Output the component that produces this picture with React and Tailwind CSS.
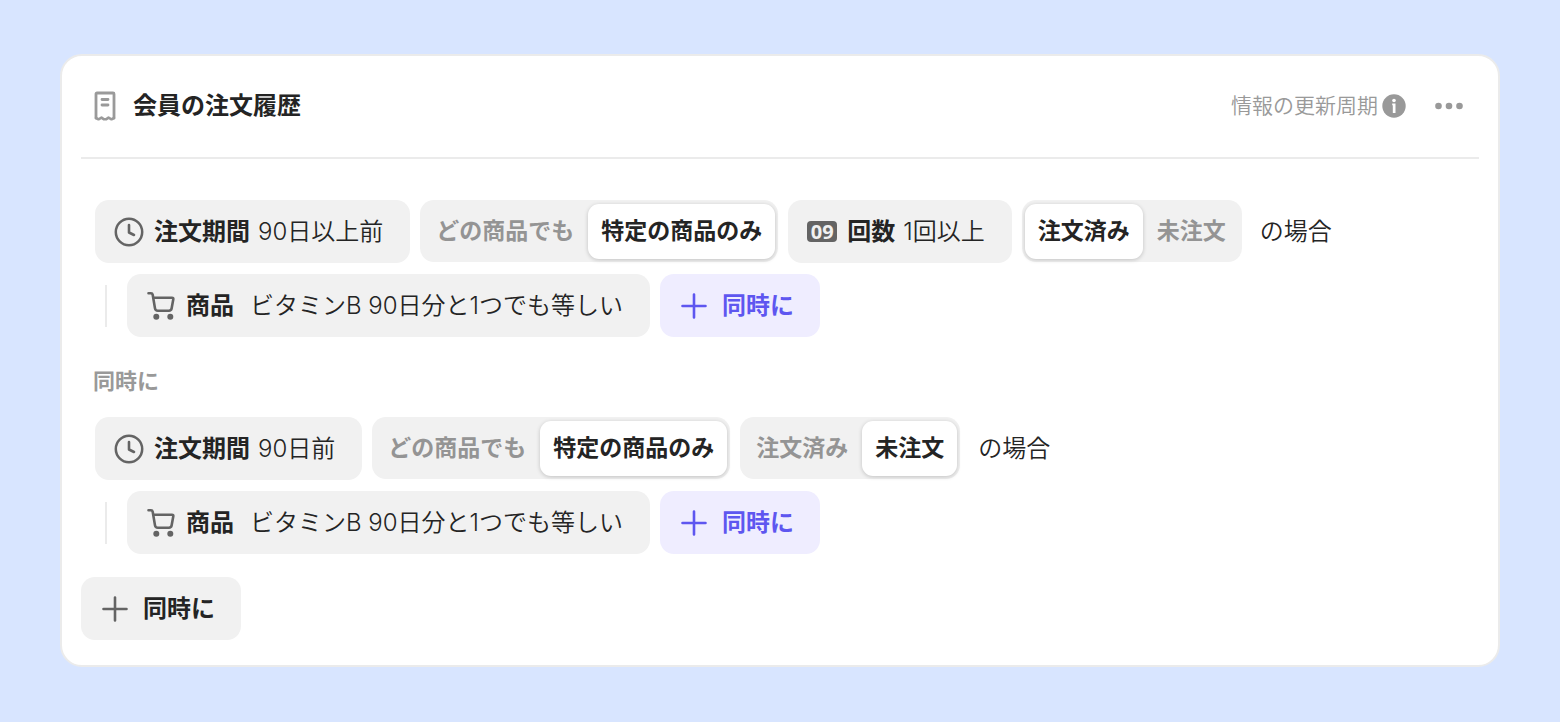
import React, { useState } from 'react';

const ReceiptIcon = () => (
  <svg width="24" height="32" viewBox="0 0 24 32" fill="none" stroke="#9a9a9a" aria-hidden="true">
    <path d="M3 28V4Q3 3 4 3H20Q21 3 21 4V28" strokeWidth="2.800" strokeLinecap="round" />
    <path d="M3 28L5.500 29.300L8.500 27.600L11 29.300H13L15.500 27.600L18.500 29.300L21 28" strokeWidth="2.600" strokeLinecap="round" strokeLinejoin="round" />
    <path d="M9 9.500H15M9 15H15" strokeWidth="2.800" strokeLinecap="round" />
  </svg>
);

const ClockIcon = () => (
  <svg width="30" height="30" viewBox="0 0 30 30" fill="none" stroke="#646464" aria-hidden="true">
    <circle cx="15" cy="15" r="13.200" strokeWidth="2.500" />
    <path d="M15 8V15.500L20 18" strokeWidth="2.600" strokeLinecap="round" strokeLinejoin="round" />
  </svg>
);

const CartIcon = () => (
  <svg width="30" height="30" viewBox="0 0 30 30" fill="none" aria-hidden="true">
    <path d="M2.500 2.300H5Q6.400 2.300 6.700 3.700L9 17.400Q9.400 19.700 11.800 19.700H23Q25.200 19.700 25.600 17.600L27.300 8.300Q27.600 6.700 26 6.700H7.500" stroke="#646464" strokeWidth="2.600" strokeLinecap="round" strokeLinejoin="round" />
    <circle cx="10.300" cy="25.700" r="3" fill="#646464" />
    <circle cx="24.300" cy="25.700" r="3" fill="#646464" />
  </svg>
);

const CountIcon = () => (
  <span className="flex h-[21px] w-[30px] items-center justify-center rounded-[4px] bg-[#646464] font-['Open_Sans',sans-serif] text-xl leading-none font-bold text-[#f1f1f1]">
    09
  </span>
);

const PlusIcon = () => (
  <svg width="28" height="28" viewBox="0 0 28 28" fill="none" stroke="currentColor" strokeWidth="2.600" strokeLinecap="round" aria-hidden="true">
    <path d="M14 2.500V25.500M2.500 14H25.500" />
  </svg>
);

const InfoIcon = () => (
  <svg width="24" height="24" viewBox="0 0 24 24" aria-hidden="true">
    <circle cx="12" cy="12" r="11.700" fill="#999" />
    <circle cx="12" cy="6.500" r="1.800" fill="#fff" />
    <path d="M10.200 9.500H13.500V19H10.800V11.200H10.200Z" fill="#fff" />
  </svg>
);

const DotsIcon = () => (
  <svg width="28" height="8" viewBox="0 0 28 8" fill="#999" aria-hidden="true">
    <circle cx="3.500" cy="4" r="3.300" />
    <circle cx="14" cy="4" r="3.300" />
    <circle cx="24.500" cy="4" r="3.300" />
  </svg>
);

const Chip = ({ icon, label, value, wide }) => (
  <button type="button" className="flex h-[63px] cursor-pointer items-center rounded-[14px] bg-[#f1f1f1] pr-[27px] pl-[19px] text-2xl">
    {icon}
    <span className="ml-[10px] font-bold">{label}</span>
    <span className={wide ? 'ml-4 font-[350]' : 'ml-2 font-[350]'}>{value}</span>
  </button>
);

const Segmented = ({ label, options, initial }) => {
  const [selected, setSelected] = useState(initial);

  return (
    <div role="group" aria-label={label} className="flex h-[62px] items-stretch gap-px rounded-[14px] bg-[#f1f1f1] px-[3px] pt-1 pb-[3px]">
      {options.map((option) => (
        <button
          key={option}
          type="button"
          aria-pressed={option === selected}
          onClick={() => setSelected(option)}
          className={`cursor-pointer rounded-[11px] px-[13px] text-[23px] font-bold ${option === selected ? 'bg-white shadow-[0_1px_4px_rgba(0,0,0,0.2)]' : 'text-[#949494]'}`}
        >
          {option}
        </button>
      ))}
    </div>
  );
};

const AddButton = ({ accent }) => (
  <button
    type="button"
    className={`flex h-[63px] cursor-pointer items-center gap-[14px] rounded-[14px] pr-[26px] pl-5 text-2xl font-bold ${accent ? 'bg-[#efedff] text-[#5e56f0]' : 'bg-[#f1f1f1]'}`}
  >
    <span className={accent ? 'text-[#5e56f0]' : 'text-[#646464]'}>
      <PlusIcon />
    </span>
    同時に
  </button>
);

const Condition = ({ period, count, status }) => (
  <div className="flex flex-col gap-[11px] pl-[14px]">
    <div className="flex flex-wrap items-start gap-[10px]">
      <Chip icon={<ClockIcon />} label="注文期間" value={period} />
      <Segmented label="商品の範囲" options={['どの商品でも', '特定の商品のみ']} initial="特定の商品のみ" />
      {count && <Chip icon={<CountIcon />} label="回数" value={count} />}
      <Segmented label="注文状況" options={['注文済み', '未注文']} initial={status} />
      <span className="ml-2 flex h-[63px] items-center text-2xl font-[350]">の場合</span>
    </div>
    <div className="flex flex-wrap items-center gap-[10px] pl-[10px]">
      <div className="mr-[10px] h-[42px] w-[2px] bg-[#ebebeb]" />
      <Chip icon={<CartIcon />} label="商品" value="ビタミンB 90日分と1つでも等しい" wide />
      <AddButton accent />
    </div>
  </div>
);

const App = () => {
  return (
    <main lang="ja" className="min-h-screen bg-[#d8e5ff] px-[60px] pt-[54px] pb-[55px] font-['Inter','Noto_Sans_CJK_JP',sans-serif] text-[#242424]">
      <section className="rounded-[22px] border-2 border-[#ebebeb] bg-white px-[19px] pb-[25px]">
        <header className="flex h-[103px] items-center border-b-2 border-[#ebebeb] pr-4 pb-[2px] pl-3">
          <ReceiptIcon />
          <h1 className="ml-4 text-2xl font-bold">会員の注文履歴</h1>
          <div className="ml-auto flex items-center gap-1 text-[21px] font-[350] text-[#999]">
            情報の更新周期
            <InfoIcon />
          </div>
          <button type="button" aria-label="メニュー" className="ml-[29px] cursor-pointer">
            <DotsIcon />
          </button>
        </header>

        <div className="pt-[41px]">
          <Condition period="90日以上前" count="1回以上" status="注文済み" />
          <p className="mt-7 mb-5 pl-3 text-[22px] leading-8 font-bold text-[#999]">同時に</p>
          <Condition period="90日前" status="未注文" />
        </div>

        <div className="mt-[23px] flex">
          <AddButton />
        </div>
      </section>
    </main>
  );
};

export default App;
